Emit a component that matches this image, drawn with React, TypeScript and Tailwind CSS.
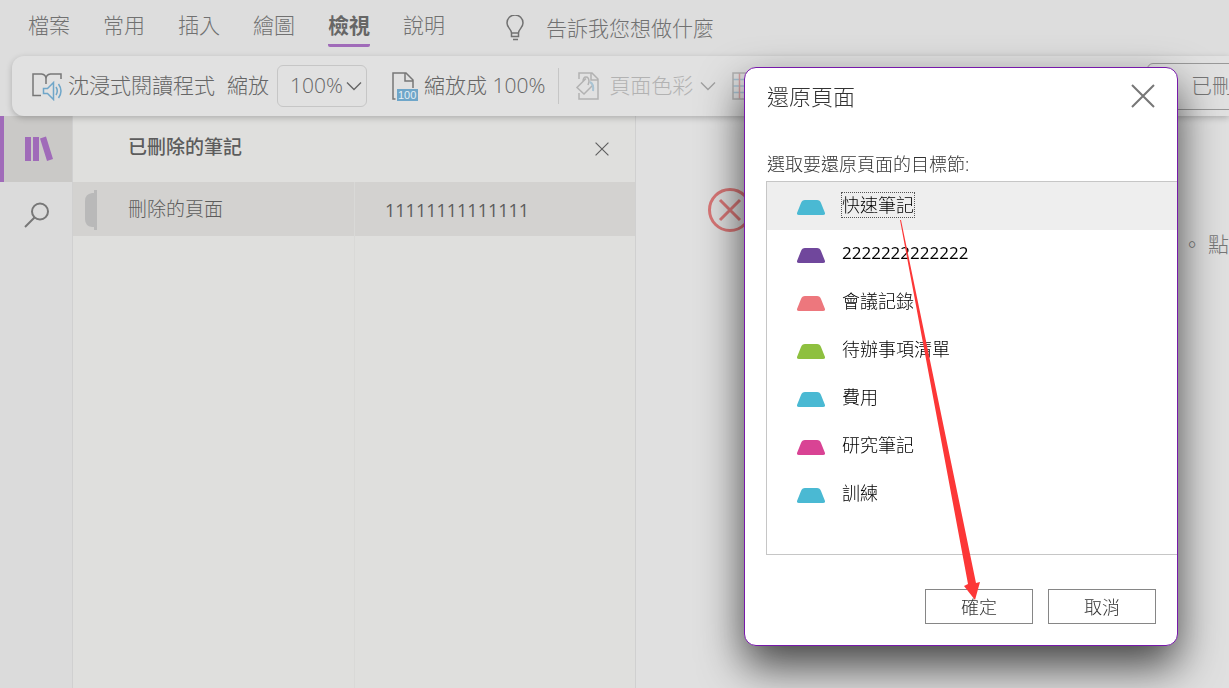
import { useState, type ReactNode } from "react";

type Section = {
  name: string;
  color: string;
};

const TABS = ["檔案", "常用", "插入", "繪圖", "檢視", "說明"];

const SECTIONS: Section[] = [
  { name: "快速筆記", color: "text-[#4ab9d3]" },
  { name: "2222222222222", color: "text-[#70479c]" },
  { name: "會議記錄", color: "text-[#ed777d]" },
  { name: "待辦事項清單", color: "text-[#8ec03f]" },
  { name: "費用", color: "text-[#4ab9d3]" },
  { name: "研究筆記", color: "text-[#d94394]" },
  { name: "訓練", color: "text-[#4ab9d3]" },
];

function ChevronDown() {
  return (
    <svg className="shrink-0" width="16" height="10" viewBox="0 0 16 10" fill="none" stroke="currentColor" strokeWidth="1.4">
      <path d="M1 1.5l7 7 7-7" />
    </svg>
  );
}

function BulbIcon() {
  return (
    <svg width="18" height="26" viewBox="0 0 18 26" fill="none" stroke="currentColor" strokeWidth="1.5">
      <path d="M5.5 18c0-4-4.500-5-4.500-10a8 8 0 0 1 16 0c0 5-4.500 6-4.500 10v3.500h-7zM5.500 18h7M7 24.500h5" />
    </svg>
  );
}

function ReaderIcon() {
  return (
    <svg className="shrink-0" width="32" height="30" viewBox="0 0 32 30" fill="none" strokeWidth="1.5">
      <path className="stroke-[#777]" d="M10 24.500H2V3h8.500q4.500.5 4.500 5 0-4.500 4.500-5H30v5M15 8v5" />
      <path className="stroke-[#6fa6c9]" d="M12.500 17.500h4l6-6v17l-6-6h-4zM25 16q2.500 4 0 8M27.500 13q5 7 0 14" />
    </svg>
  );
}

function ZoomPageIcon() {
  return (
    <svg className="shrink-0" width="28" height="30" viewBox="0 0 28 30" fill="none" strokeWidth="1.5">
      <path className="stroke-[#777]" d="M4.500 28H2V2h13l7 7v8M14 2v8h8" />
      <rect className="fill-[#6fa6c9]" x="6" y="18" width="21" height="12" />
      <text className="fill-[#e4eef4] font-['Liberation_Sans',sans-serif] text-[11px]" x="7" y="28">
        100
      </text>
    </svg>
  );
}

function PageColorIcon() {
  return (
    <svg className="shrink-0" width="26" height="30" viewBox="0 0 26 30" fill="none" strokeWidth="1.5">
      <path className="stroke-[#b2b2b2]" d="M4 8V2h13l6 6v20H4v-6M16 2v7h7" />
      <path className="stroke-[#b2b2b2]" d="M11 7.500L2 16.500l7 6.500 9-9M8 11q0-5 3-5t3 5l-1 3" />
      <path className="stroke-[#a9c3d3]" strokeWidth="2" d="M15 11q4 2 3 9" />
    </svg>
  );
}

function GridIcon() {
  return (
    <svg className="shrink-0" width="28" height="28" viewBox="0 0 28 28" fill="none" strokeWidth="1.500">
      <path className="stroke-[#a9c3d3]" d="M1 7.500h26M1 14h26M1 20.500h26" />
      <path className="stroke-[#d8a5a5]" d="M7.500 1v26" />
      <path className="stroke-[#b2b2b2]" d="M1 1h26v26H1z" />
    </svg>
  );
}

function BooksIcon() {
  return (
    <svg width="28" height="26" viewBox="0 0 28 26" fill="currentColor">
      <path d="M0 1h6v24H0zM8 1h6v24H8zM15 2.500L21 .5l7 22.500-6 2z" />
    </svg>
  );
}

function SearchIcon() {
  return (
    <svg width="26" height="26" viewBox="0 0 26 26" fill="none" stroke="currentColor" strokeWidth="2">
      <circle cx="16" cy="9.500" r="8" />
      <path d="M10.500 15.500L1 25" />
    </svg>
  );
}

function CloseIcon({ size }: { size: number }) {
  return (
    <svg width={size} height={size} viewBox="0 0 24 24" fill="none" stroke="currentColor" strokeWidth="2">
      <path d="M1 1l22 22M23 1L1 23" />
    </svg>
  );
}

function MenuBar() {
  return (
    <header className="flex h-14 shrink-0 items-start pl-7 whitespace-nowrap text-[#717171]">
      <nav className="flex gap-[33px]">
        {TABS.map((tab) => (
          <button
            className={
              tab === "檢視"
                ? "h-[47px] w-[42px] rounded-b-xs border-b-3 border-[#a06bb9] pt-[11px] pb-1 leading-[29px] font-semibold text-[#666]"
                : "h-[47px] w-[42px] border-b-3 border-transparent pt-[11px] pb-1 leading-[29px]"
            }
            key={tab}
            type="button"
          >
            {tab}
          </button>
        ))}
      </nav>
      <button className="ml-[61px] flex items-center gap-[22px] pt-[13px] leading-[30px]" type="button">
        <BulbIcon />
        告訴我您想做什麼
      </button>
    </header>
  );
}

function Toolbar() {
  return (
    <div className="relative z-10 ml-3 flex h-[60px] shrink-0 items-center overflow-x-clip rounded-l-xl bg-[#e1e1e1] whitespace-nowrap text-[#666] shadow-[0_2px_6px_rgba(0,0,0,0.22)]">
      <button className="ml-[19px] flex items-center gap-[5px]" type="button">
        <ReaderIcon />
        沈浸式閱讀程式
      </button>
      <span className="ml-3">縮放</span>
      <button
        aria-label="縮放 100%"
        className="ml-2 flex h-[42px] w-[90px] items-center justify-between rounded-md border border-[#c6c6c6] pr-1 pl-3"
        type="button"
      >
        100%
        <ChevronDown />
      </button>
      <button className="ml-6 flex items-center gap-[5px]" type="button">
        <ZoomPageIcon />
        縮放成 100%
      </button>
      <div className="ml-[13px] h-9 w-px bg-[#c6c6c6]" />
      <button className="ml-4 flex items-center gap-2 text-[#b2b2b2]" type="button">
        <PageColorIcon />
        頁面色彩
        <span className="-ml-px text-[#a0a0a0]">
          <ChevronDown />
        </span>
      </button>
      <button aria-label="格線" className="ml-4" type="button">
        <GridIcon />
      </button>
      <button
        className="-mr-3 ml-auto flex h-[47px] w-[94px] shrink-0 items-center rounded-md border border-[#999] pl-[43px] text-[#777]"
        type="button"
      >
        已刪
      </button>
    </div>
  );
}

function NotebookPanel() {
  return (
    <section className="flex w-[563px] shrink-0 flex-col border-r border-[#d0d0d0] bg-[#dfdfdd] text-[19px] text-[#5c5c5c]">
      <div className="flex h-[66px] shrink-0 items-center justify-between pr-[26px] pl-[55px]">
        <h2 className="pb-1 font-medium">已刪除的筆記</h2>
        <button aria-label="關閉" className="text-[#606060]" type="button">
          <CloseIcon size={14} />
        </button>
      </div>
      <div className="flex min-h-0 flex-1">
        <div className="w-[282px] border-r border-[#d9d9d7]">
          <button className="flex h-[54px] w-full items-center bg-[#d3d2d0] pt-px pl-3" type="button">
            <svg className="mr-[31px]" width="12" height="40" viewBox="0 0 12 40" fill="#b9b9b9">
              <path d="M12 0v40H9v-3H7q-7-1-7-8V11q0-7 7-8h2V0z" />
            </svg>
            刪除的頁面
          </button>
        </div>
        <div className="flex-1">
          <button
            className="flex h-[54px] w-full items-center bg-[#d3d2d0] pt-px pl-[30px] text-lg font-normal"
            type="button"
          >
            11111111111111
          </button>
        </div>
      </div>
    </section>
  );
}

function SectionIcon({ className }: { className: string }) {
  return (
    <svg className={className} width="28" height="16" viewBox="0 0 28 16" fill="currentColor">
      <path d="M8 0h12q3 0 4 3l4 10q.5 2-2 2H2q-2.500 0-2-2L4 3q1-3 4-3z" />
    </svg>
  );
}

function DialogButton({ children }: { children: ReactNode }) {
  return (
    <button className="h-[35px] w-[108px] border border-[#868686] bg-white" type="button">
      {children}
    </button>
  );
}

function RestoreDialog() {
  const [selected, setSelected] = useState(SECTIONS[0].name);

  return (
    <div className="fixed inset-0 z-20 flex items-start justify-end pt-[67px] pr-[51px]">
      <div
        aria-labelledby="restore-title"
        className="relative w-[434px] rounded-xl border border-[#7719aa] bg-white pb-[21px] pl-[21px] text-lg leading-6 text-[#333] shadow-[0_20px_44px_rgba(0,0,0,0.7)]"
        role="dialog"
      >
        <div className="flex h-14 items-center justify-between pr-[22px] pl-px">
          <h1 className="text-[22px] leading-7" id="restore-title">
            還原頁面
          </h1>
          <button aria-label="關閉" className="text-[#777]" type="button">
            <CloseIcon size={24} />
          </button>
        </div>
        <p className="mt-7 pl-px" id="restore-label">
          選取要還原頁面的目標節:
        </p>
        <ul aria-labelledby="restore-label" className="mt-[5px] h-[374px] border-y border-l border-[#c6c6c6] text-black">
          {SECTIONS.map(({ name, color }) => (
            <li key={name}>
              <button
                className={
                  name === selected
                    ? "flex h-12 w-full items-center gap-4 bg-[#eee] pb-0.5 pl-[30px]"
                    : "flex h-12 w-full items-center gap-4 pb-0.5 pl-[30px]"
                }
                onClick={() => setSelected(name)}
                type="button"
              >
                <SectionIcon className={`${color} mt-1.5`} />
                <span
                  className={
                    name === selected
                      ? "border border-dotted border-[#555]"
                      : /^\d+$/.test(name)
                        ? "border border-transparent text-[17px] font-normal"
                        : "border border-transparent"
                  }
                >
                  {name}
                </span>
              </button>
            </li>
          ))}
        </ul>
        <div className="mt-[34px] flex justify-end gap-[15px] pr-[21px]">
          <DialogButton>確定</DialogButton>
          <DialogButton>取消</DialogButton>
        </div>
        {/* arrow from the chosen section to the confirm button */}
        <svg
          className="pointer-events-none absolute top-[152px] left-[154px]"
          width="84"
          height="382"
          viewBox="0 0 84 382"
          fill="#fc3737"
        >
          <path d="M1 0L69 364 65 366 76 380 81 362 77 363 2 0z" />
        </svg>
      </div>
    </div>
  );
}

export default function App() {
  return (
    <div className="flex h-screen flex-col overflow-hidden bg-[#ddd] font-['Open_Sans','Noto_Sans_CJK_TC',sans-serif] text-[21px] font-light">
      <MenuBar />
      <Toolbar />
      <div className="flex min-h-0 flex-1">
        <aside className="flex w-[73px] shrink-0 flex-col border-r border-[#d0d0d0] bg-[#dbdbdb]">
          <button
            aria-label="筆記本"
            className="flex h-[66px] items-center border-l-4 border-[#a06bb9] bg-[#cac9c7] pl-[21px] text-[#a06bb9]"
            type="button"
          >
            <BooksIcon />
          </button>
          <button aria-label="搜尋" className="flex h-[66px] items-center pl-6 text-[#777]" type="button">
            <SearchIcon />
          </button>
        </aside>
        <NotebookPanel />
        <main className="flex flex-1 items-start justify-between bg-[#e0e0e0] pl-[72px] whitespace-nowrap text-[#777]">
          <svg className="mt-[72px] shrink-0" width="44" height="44" viewBox="0 0 44 44" fill="none" stroke="#d97777" strokeWidth="3">
            <circle cx="22" cy="22" r="20.500" />
            <path d="M12 12l20 20M32 12L12 32" />
          </svg>
          <p className="mt-[113px] leading-[30px]">。 點</p>
        </main>
      </div>
      <RestoreDialog />
    </div>
  );
}
